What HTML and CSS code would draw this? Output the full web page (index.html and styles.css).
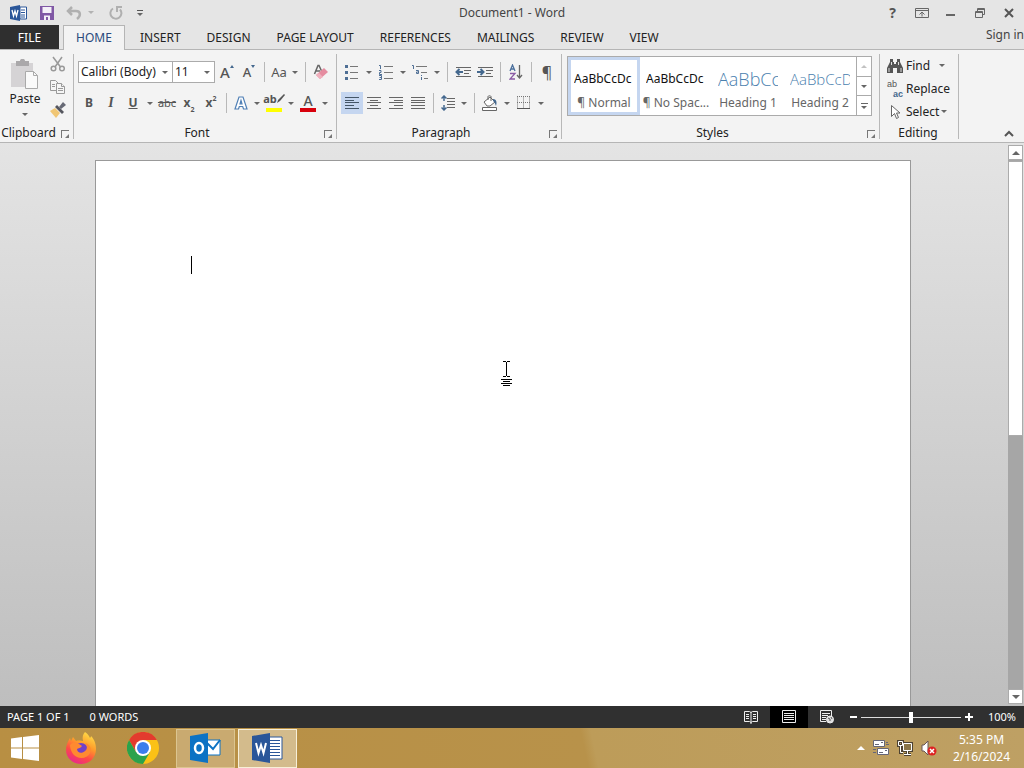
FILE: index.html
```
<!DOCTYPE html>
<html lang="en">

<head>
    <meta charset="UTF-8">
    <meta name="viewport" content="width=device-width, initial-scale=1.0">
    <title>Document1 - Word</title>
    <link rel="stylesheet" href="styles.css">
</head>

<body>

    <header class="titlebar">
        <div class="quick-access">
            <svg class="word-logo" width="18" height="16" viewBox="0 0 18 16">
                <path d="M10 2h6.500v12H10z" fill="#fff" stroke="#2a5699" />
                <path d="M11 5h4M11 7.500h4M11 10h4M11 12h4" stroke="#2a5699" />
                <path d="M0 2l10-2v16L0 14z" fill="#2a5699" />
                <path d="M2 5l1.500 6L5 6l1.500 5L8 5" fill="none" stroke="#fff" stroke-width="1.300" />
            </svg>
            <button aria-label="Save">
                <svg width="14" height="14" viewBox="0 0 14 14">
                    <path d="M0 0h14v14H0z" fill="#8058a5" />
                    <path d="M2.500 1h9v6h-9zM4 9.500h6V14H8V11H6v3H4z" fill="#f4f0f8" />
                </svg>
            </button>
            <button aria-label="Undo">
                <svg width="16" height="14" viewBox="0 0 16 14" fill="none" stroke="#b0b0b0" stroke-width="2.500">
                    <path d="M6 1L2 5l4 4M2 5h8c5 0 5 5 1 8" />
                </svg>
            </button>
            <button class="arrow pale" aria-label="Undo list"></button>
            <button aria-label="Repeat">
                <svg width="14" height="14" viewBox="0 0 14 14" fill="none" stroke="#b0b0b0" stroke-width="2">
                    <path d="M4 2.500A5.500 5.500 0 1 0 11 3.500M8 6V1h5" />
                </svg>
            </button>
            <button class="customize" aria-label="Customize toolbar"></button>
        </div>
        <h1>Document1 - Word</h1>
        <div class="window-buttons">
            <button class="help" aria-label="Help">?</button>
            <button aria-label="Ribbon display options">
                <svg width="14" height="12" viewBox="0 0 14 12" fill="none" stroke="#666">
                    <path d="M.5 1.500h13v9H.5zM.5 3.500h13M7 9.500V5M4.500 7.500L7 5l2.500 2.500" />
                </svg>
            </button>
            <button aria-label="Minimize">
                <svg width="10" height="12" viewBox="0 0 10 12"><path d="M0 7h9v2H0z" fill="#666" /></svg>
            </button>
            <button aria-label="Restore">
                <svg width="12" height="12" viewBox="0 0 12 12" fill="none" stroke="#666">
                    <path d="M1.500 4.500h7v6h-7zM1 5.500h8M3.500 4V1.500h7v6H9M3 2.500h8" />
                </svg>
            </button>
            <button aria-label="Close">
                <svg width="12" height="12" viewBox="0 0 12 12" stroke="#555" stroke-width="2">
                    <path d="M2 2l8 8M10 2l-8 8" />
                </svg>
            </button>
        </div>
    </header>

    <nav class="tabs">
        <button class="file">FILE</button>
        <button class="active">HOME</button>
        <button>INSERT</button>
        <button>DESIGN</button>
        <button>PAGE LAYOUT</button>
        <button>REFERENCES</button>
        <button>MAILINGS</button>
        <button>REVIEW</button>
        <button>VIEW</button>
        <a class="sign-in" href="#">Sign in</a>
    </nav>

    <main class="ribbon">
        <section class="group clipboard">
            <div class="group-body">
                <button class="paste">
                    <svg width="30" height="32" viewBox="0 0 30 32">
                        <path d="M1 4h22v24H1z" fill="#d5d3d5" />
                        <path d="M6 2h4c0-3 5-3 5 0h4v5H6z" fill="#aaa8aa" />
                        <path d="M15.500 12.500h8l4 4v13h-12z" fill="#fafafa" stroke="#aaa" />
                        <path d="M23.500 12.500v4h4" fill="none" stroke="#aaa" />
                    </svg>
                    <span>Paste</span>
                    <i class="triangle"></i>
                </button>
                <div class="clip-tools">
                    <button aria-label="Cut">
                        <svg width="16" height="16" viewBox="0 0 16 16" fill="none" stroke="#999" stroke-width="1.500">
                            <path d="M3 1l7.500 10M12 1L5 11" />
                            <circle cx="3.500" cy="12.500" r="2.300" />
                            <circle cx="12" cy="12.500" r="2.300" />
                        </svg>
                    </button>
                    <button aria-label="Copy">
                        <svg width="16" height="16" viewBox="0 0 16 16" fill="#f5f5f5" stroke="#999">
                            <path d="M.5 1.500h5l3 3v7h-8z" />
                            <path d="M2 5.500h3M2 7.500h3" />
                            <path d="M6.500 4.500h5l3 3v7h-8z" />
                            <path d="M11.500 4.500v3h3M8 9.500h5M8 11.500h5" />
                        </svg>
                    </button>
                    <button aria-label="Format Painter">
                        <svg width="16" height="16" viewBox="0 0 16 16">
                            <path d="M0 9l5-3 5 5-4 5z" fill="#f0c674" />
                            <path d="M5 5l2-2 7 7-2 2z" fill="#55565e" />
                            <path d="M9 5l4-5 3 3-5 4z" fill="#666975" />
                        </svg>
                    </button>
                </div>
            </div>
            <footer>Clipboard<button class="launcher" aria-label="Clipboard options"></button></footer>
        </section>

        <section class="group font">
            <div class="group-body">
                <div class="row">
                    <label class="combo family"><select aria-label="Font"><option>Calibri (Body)</option></select></label>
                    <label class="combo size"><select aria-label="Font size"><option>11</option></select></label>
                    <button class="tool grow" aria-label="Grow font">A<i></i></button>
                    <button class="tool grow shrink" aria-label="Shrink font">A<i></i></button>
                    <hr>
                    <button class="tool narrow case">Aa</button>
                    <button class="arrow" aria-label="Case list"></button>
                    <hr>
                    <button class="tool" aria-label="Clear formatting">
                        <svg width="16" height="16" viewBox="0 0 16 16">
                            <path d="M1.500 10L5 1.500h1L9 8M3 7h4" fill="none" stroke="#666" stroke-width="1.500" />
                            <path d="M3 11l8-7 4 4-8 7z" fill="#e58ca0" />
                            <path d="M3 11l3-2 4 4-3 2z" fill="#f0b0bd" />
                        </svg>
                    </button>
                </div>
                <div class="row">
                    <button class="tool bold">B</button>
                    <button class="tool italic">I</button>
                    <button class="tool underline">U</button>
                    <button class="arrow" aria-label="Underline list"></button>
                    <button class="tool strike">abc</button>
                    <button class="tool bold script">x<sub>2</sub></button>
                    <button class="tool bold script">x<sup>2</sup></button>
                    <hr>
                    <button class="tool narrow" aria-label="Text effects">
                        <svg width="14" height="14" viewBox="0 0 14 14">
                            <path d="M1 13L5 1h4l4 12h-3.500l-.8-2.500H5.300L4.500 13zM6 8h2L7 4.500z" fill="#fff" stroke="#4f7fb5" stroke-width="1.200" />
                        </svg>
                    </button>
                    <button class="arrow" aria-label="Effects list"></button>
                    <button class="tool mark">
                        <span>ab</span>
                        <svg width="8" height="10" viewBox="0 0 8 10"><path d="M0 9l1-3 6-6 1 1-5 6z" fill="#555" /></svg>
                    </button>
                    <button class="arrow" aria-label="Highlight list"></button>
                    <button class="tool text-color">A</button>
                    <button class="arrow" aria-label="Color list"></button>
                </div>
            </div>
            <footer>Font<button class="launcher" aria-label="Font options"></button></footer>
        </section>

        <section class="group paragraph">
            <div class="group-body">
                <div class="row">
                    <button class="tool" aria-label="Bullets">
                        <svg width="14" height="16" viewBox="0 0 14 16">
                            <path d="M0 1h3v3H0zM0 7h3v3H0zM0 13h3v3H0z" fill="#4f6f95" />
                            <path d="M5 2.500h8M5 8.500h8M5 14.500h8" stroke="#777" />
                        </svg>
                    </button>
                    <button class="arrow" aria-label="Bullet list"></button>
                    <button class="tool" aria-label="Numbering">
                        <svg width="16" height="16" viewBox="0 0 16 16" fill="none" stroke="#4f6f95">
                            <path d="M1 1.500h1.500V5M1 6.500h2v2H1.500v2H4M1 11.500h2.500v4H1M1.500 13.500h2" />
                            <path d="M6 2.500h9M6 8.500h9M6 14.500h9" stroke="#777" />
                        </svg>
                    </button>
                    <button class="arrow" aria-label="Numbering list"></button>
                    <button class="tool" aria-label="Multilevel list">
                        <svg width="16" height="16" viewBox="0 0 16 16" fill="none" stroke="#4f6f95">
                            <path d="M0 1.500h1.500V5M4 6.500h2.500v3H4.500V8h2M9.500 11v1M9.500 13v3" />
                            <path d="M4 2.500h11M9 8.500h6M12 14.500h4" stroke="#777" />
                        </svg>
                    </button>
                    <button class="arrow" aria-label="Multilevel options"></button>
                    <hr>
                    <button class="tool" aria-label="Decrease indent">
                        <svg width="16" height="12" viewBox="0 0 16 12" fill="none" stroke="#666">
                            <path d="M1 1.500h15M9 4.500h7M9 7.500h5M1 10.500h15" />
                            <path d="M8 6H2M4.500 3L1.500 6l3 3" stroke="#44688e" stroke-width="2" />
                        </svg>
                    </button>
                    <button class="tool" aria-label="Increase indent">
                        <svg width="16" height="12" viewBox="0 0 16 12" fill="none" stroke="#666">
                            <path d="M1 1.500h15M9 4.500h7M9 7.500h5M1 10.500h15" />
                            <path d="M0 6h6M3.500 3l3 3-3 3" stroke="#44688e" stroke-width="2" />
                        </svg>
                    </button>
                    <hr>
                    <button class="tool" aria-label="Sort">
                        <svg width="14" height="16" viewBox="0 0 14 16" fill="none" stroke-width="1.300">
                            <path d="M1 7l2.500-6L6 7M2 5h3" stroke="#4a6f9c" />
                            <path d="M1 9.500h5l-5 5.500h5" stroke="#8a5ba5" />
                            <path d="M10.500 1v13M8 11l2.500 3 2.500-3" stroke="#666" />
                        </svg>
                    </button>
                    <hr>
                    <button class="tool pilcrow">¶</button>
                </div>
                <div class="row">
                    <button class="tool selected" aria-label="Align left">
                        <svg width="14" height="12" viewBox="0 0 14 12" stroke="#456">
                            <path d="M0 .5h14M0 3.500h9M0 5.500h14M0 8.500h9M0 11.500h14" />
                        </svg>
                    </button>
                    <button class="tool" aria-label="Center">
                        <svg width="14" height="12" viewBox="0 0 14 12" stroke="#666">
                            <path d="M0 .5h14M3 3.500h8M0 5.500h14M3 8.500h8M0 11.500h14" />
                        </svg>
                    </button>
                    <button class="tool" aria-label="Align right">
                        <svg width="14" height="12" viewBox="0 0 14 12" stroke="#666">
                            <path d="M0 .5h14M5 3.500h9M0 5.500h14M5 8.500h9M0 11.500h14" />
                        </svg>
                    </button>
                    <button class="tool" aria-label="Justify">
                        <svg width="14" height="12" viewBox="0 0 14 12" stroke="#666">
                            <path d="M0 .5h14M0 3.500h14M0 5.500h14M0 8.500h14M0 11.500h14" />
                        </svg>
                    </button>
                    <hr>
                    <button class="tool narrow" aria-label="Line spacing">
                        <svg width="14" height="16" viewBox="0 0 14 16" fill="none" stroke="#666">
                            <path d="M6 3.500h8M6 6.500h8M6 9.500h8M6 12.500h8" />
                            <path d="M3 1v5M.5 3.500L3 1l2.500 2.500M3 10v5M.5 12.500L3 15l2.500-2.500" stroke="#44688e" stroke-width="1.500" />
                        </svg>
                    </button>
                    <button class="arrow" aria-label="Spacing list"></button>
                    <hr>
                    <button class="tool" aria-label="Shading">
                        <svg width="18" height="16" viewBox="0 0 18 16" fill="none" stroke="#666">
                            <path d="M1.500 12.500h14v3h-14z" fill="#fff" />
                            <path d="M3 7l6-5 5 5-5 4H6z" fill="#fff" />
                            <path d="M7 5V1.500c0-1 3-1 3 0V6" />
                            <path d="M12 4c4 0 4 4 3 7-1-2-1-4-3-5z" fill="#44688e" stroke="none" />
                        </svg>
                    </button>
                    <button class="arrow" aria-label="Shading list"></button>
                    <button class="tool" aria-label="Borders">
                        <svg width="14" height="14" viewBox="0 0 14 14" fill="none" stroke="#777">
                            <path d="M.5.5v12M6.500.5v12M12.500.5v12M0 .5h13M0 6.500h13" stroke-dasharray="1 1" />
                            <path d="M0 12.500h13" stroke="#555" />
                        </svg>
                    </button>
                    <button class="arrow" aria-label="Border list"></button>
                </div>
            </div>
            <footer>Paragraph<button class="launcher" aria-label="Paragraph options"></button></footer>
        </section>

        <section class="group styles">
            <div class="group-body">
                <div class="gallery">
                    <button class="style chosen"><b>AaBbCcDc</b><span>¶ Normal</span></button>
                    <button class="style"><b>AaBbCcDc</b><span>¶ No Spac...</span></button>
                    <button class="style heading1"><b>AaBbCc</b><span>Heading 1</span></button>
                    <button class="style heading2"><b>AaBbCcD</b><span>Heading 2</span></button>
                    <div class="scroller">
                        <button class="up pale" aria-label="Previous styles"></button>
                        <button aria-label="Next styles"></button>
                        <button class="more" aria-label="All styles"></button>
                    </div>
                </div>
            </div>
            <footer>Styles<button class="launcher" aria-label="Styles options"></button></footer>
        </section>

        <section class="group editing">
            <div class="group-body">
                <button class="edit">
                    <svg width="16" height="14" viewBox="0 0 16 14" fill="#555">
                        <path d="M3 0h3v3h1v2h2V3h1V0h3v3l3 6v5h-6V9H6v5H0V9l3-6z" />
                        <path d="M2 9v4M14 9v4M4.500 3v3M11.500 3v3" stroke="#ddd" />
                    </svg>
                    <span>Find</span><i class="triangle"></i>
                </button>
                <button class="edit replace">
                    <em><span>ab</span><b>ac</b></em>
                    <span>Replace</span>
                </button>
                <button class="edit select">
                    <svg width="16" height="16" viewBox="0 0 16 16">
                        <path d="M4.500 1.500v11l3-3 2 5 2-1-2-4.500h3.500z" fill="#fff" stroke="#666" />
                    </svg>
                    <span>Select</span><i class="triangle"></i>
                </button>
            </div>
            <footer>Editing</footer>
        </section>

        <button class="collapse" aria-label="Collapse the ribbon">
            <svg width="10" height="8" viewBox="0 0 10 8" fill="none" stroke="#555" stroke-width="2">
                <path d="M1 6l4-4 4 4" />
            </svg>
        </button>
    </main>

    <div class="workspace">
        <div class="desk">
            <article class="page"><span class="caret"></span></article>
            <svg class="pointer" width="12" height="26" viewBox="0 0 12 26" stroke="#000">
                <path d="M2 .5h3M6 .5h3M5.500 1v14M2 15.500h3M6 15.500h3M0 18.500h11M2 20.500h7M0 22.500h11M2 24.500h7" />
            </svg>
        </div>
        <div class="scrollbar">
            <button class="up" aria-label="Scroll up"></button>
            <div class="track"><div class="thumb"></div></div>
            <button aria-label="Scroll down"></button>
        </div>
    </div>

    <footer class="statusbar">
        <span>PAGE 1 OF 1</span>
        <span>0 WORDS</span>
        <div class="views">
            <button aria-label="Read mode">
                <svg width="14" height="14" viewBox="0 0 14 14" fill="none" stroke="#eee">
                    <path d="M.5 1.500h5l1.500 1 1.500-1h5v10h-5l-1.500 1-1.500-1h-5zM7 2v12M2 4.500h3M2 6.500h3M2 8.500h3M9 4.500h3M9 6.500h3M9 8.500h3" />
                </svg>
            </button>
            <button class="on" aria-label="Print layout">
                <svg width="14" height="14" viewBox="0 0 14 14" fill="none" stroke="#eee">
                    <path d="M.5.5h13v12H.5zM2 3.500h10M2 5.500h10M2 7.500h10M2 9.500h10" />
                </svg>
            </button>
            <button aria-label="Web layout">
                <svg width="14" height="14" viewBox="0 0 14 14" fill="none" stroke="#eee">
                    <path d="M6 11.500H.5V.5h11V6M2 3.500h8M2 5.500h6M2 7.500h4M2 9.500h4" />
                    <circle cx="10" cy="9.500" r="3.500" fill="#ddd" />
                    <path d="M8 8l2 1v2M11 7l1 2" stroke="#555" />
                </svg>
            </button>
        </div>
        <div class="zoom">
            <button class="minus" aria-label="Zoom out"></button>
            <input type="range" min="0" max="100" value="50" aria-label="Zoom">
            <button class="plus" aria-label="Zoom in"></button>
        </div>
        <span class="percent">100%</span>
    </footer>

    <footer class="taskbar">
        <button class="task start" aria-label="Start">
            <svg width="28" height="26" viewBox="0 0 28 26" fill="#fff">
                <path d="M0 3.500L11 2v10.500H0zM12 2l16-2v12.500H12zM0 13.500h11V24L0 22.500zM12 13.500h16V26l-16-2z" />
            </svg>
        </button>
        <button class="task" aria-label="Firefox">
            <svg width="32" height="32" viewBox="0 0 32 32">
                <defs>
                    <linearGradient id="fire" x1="0.800" y1="0" x2="0.300" y2="1">
                        <stop offset="0" stop-color="#ffe24a" />
                        <stop offset="0.400" stop-color="#ff9a2a" />
                        <stop offset="0.700" stop-color="#ff4a45" />
                        <stop offset="1" stop-color="#e8278f" />
                    </linearGradient>
                </defs>
                <path d="M20 0c3 2 4 4 5 6 1-1 1-2 1-2 4 4 5 9 5 13 0 9-7 15-15 15S1 26 1 18c0-5 2-9 4-12l1 3 2-4 3 4c3-1 6 0 7 0-1-4 0-7 2-9z" fill="url(#fire)" />
                <circle cx="16" cy="18" r="7" fill="#7241c8" />
                <path d="M5 13c3-3 6-3 9-1l3 2c-1 2-4 2-5 3 0 4 5 5 8 2 3-2 2-6 0-8 5 1 7 6 5 10-3 6-12 7-17 1-2-3-3-6-3-9z" fill="#ff8a30" />
            </svg>
        </button>
        <button class="task" aria-label="Chrome">
            <svg width="32" height="32" viewBox="0 0 32 32">
                <circle cx="16" cy="16" r="16" fill="#fbc116" />
                <path d="M2.100 8A16 16 0 0 1 29.900 8H16l-7 12z" fill="#e33b2e" />
                <path d="M2.100 8A16 16 0 0 0 16 32l7-12-14 0z" fill="#2ba24c" />
                <circle cx="16" cy="16" r="8" fill="#fff" />
                <circle cx="16" cy="16" r="6" fill="#3b7ded" />
            </svg>
        </button>
        <button class="task open" aria-label="Outlook">
            <svg width="32" height="30" viewBox="0 0 32 30">
                <path d="M17 7h13v15H17z" fill="#fff" stroke="#0c72c4" />
                <path d="M17 10l6 6 7-9" fill="none" stroke="#0c72c4" stroke-width="2" />
                <path d="M0 3l18-3v30L0 27z" fill="#0c72c4" />
                <ellipse cx="9" cy="15" rx="4" ry="5" fill="none" stroke="#fff" stroke-width="2.500" />
            </svg>
        </button>
        <button class="task open current" aria-label="Word">
            <svg width="32" height="30" viewBox="0 0 32 30">
                <path d="M17 4h13v22H17z" fill="#fff" stroke="#2a5699" />
                <path d="M18 7.500h10M18 10.500h10M18 13.500h10M18 16.500h10M18 19.500h10M18 22.500h10" stroke="#2a5699" />
                <path d="M0 3l18-3v30L0 27z" fill="#2a5699" />
                <path d="M4 10l2.500 10L9 12l2.500 8L14 10" fill="none" stroke="#fff" stroke-width="2" />
            </svg>
        </button>
        <div class="tray">
            <button aria-label="Hidden icons">
                <svg width="8" height="6" viewBox="0 0 8 6"><path d="M0 5l4-4 4 4z" fill="#fff" /></svg>
            </button>
            <button aria-label="Mail">
                <svg width="16" height="16" viewBox="0 0 16 16" fill="#fff" stroke="#667">
                    <path d="M.5.5h11v6H.5zM4.500 8.500h11v6h-11z" />
                    <path d="M8 2.500h2M2 4.500h4M12 10.500h2M6 12.500h4M13 2.500h2M13 4.500h3M0 9.500h3M0 12.500h3" />
                </svg>
            </button>
            <button aria-label="Network">
                <svg width="16" height="16" viewBox="0 0 16 16" fill="none">
                    <path d="M6.500 3.500h8v7h-8zM10.500 11v3M7 14.500h7M1.500 1.500h4v4h-4zM3.500 6v6.500H6" stroke="#4d4231" stroke-width="3" />
                    <path d="M6.500 3.500h8v7h-8z" fill="#8a7548" />
                    <path d="M6.500 3.500h8v7h-8zM10.500 11v3M7 14.500h7M1.500 1.500h4v4h-4zM3.500 6v6.500H6" stroke="#fff" />
                </svg>
            </button>
            <button aria-label="Volume muted">
                <svg width="16" height="16" viewBox="0 0 16 16">
                    <path d="M1 5h2l4-4v14l-4-4H1z" fill="#fff" stroke="#655" />
                    <circle cx="11" cy="11" r="4.500" fill="#d22" />
                    <path d="M9 9l4 4M13 9l-4 4" stroke="#fff" stroke-width="1.500" />
                </svg>
            </button>
        </div>
        <div class="clock"><span>5:35 PM</span><span>2/16/2024</span></div>
    </footer>

</body>

</html>
```
FILE: styles.css
```
* {
    box-sizing: border-box;
}

body {
    margin: 0;
    height: 100vh;
    display: flex;
    flex-direction: column;
    overflow: hidden;
    background: #e5e5e5;
    color: #222;
    font-family: "Noto Sans", "Open Sans", sans-serif;
    font-size: 12px;
    line-height: 16px;
}

button {
    display: flex;
    align-items: center;
    justify-content: center;
    flex-shrink: 0;
    margin: 0;
    padding: 0;
    border: none;
    background: none;
    color: inherit;
    font: inherit;
    cursor: pointer;
}

svg {
    display: block;
    flex-shrink: 0;
}

/* Small drop-down triangles */

.triangle,
.arrow::before,
.combo::after,
.customize::before,
.scroller button::before,
.scrollbar button::before {
    content: "";
    border: 3px solid transparent;
    border-top-color: #666;
    border-bottom: none;
}

.scroller .up::before,
.scrollbar .up::before {
    border-top: none;
    border-bottom: 3px solid #666;
}

.arrow {
    width: 12px;
    height: 22px;
}

.pale {
    opacity: 0.4;
}

/* Title bar */

.titlebar {
    display: grid;
    grid-template-columns: 1fr auto 1fr;
    align-items: center;
    height: 25px;
    flex-shrink: 0;
}

.titlebar h1 {
    margin: 0;
    font-size: 12px;
    font-weight: normal;
    color: #444;
}

.quick-access {
    display: flex;
    align-items: center;
    padding-left: 10px;
    height: 22px;
}

.quick-access button {
    margin-left: 12px;
}

.quick-access .arrow {
    margin-left: 3px;
}

.quick-access .customize {
    flex-direction: column;
    gap: 2px;
    width: 8px;
    margin-left: 13px;
}

.customize::before {
    order: 2;
}

.customize::after {
    content: "";
    width: 6px;
    height: 1px;
    background: #555;
}

.window-buttons {
    display: flex;
    justify-content: flex-end;
    padding-right: 1px;
}

.window-buttons button {
    width: 29px;
    height: 22px;
}

.window-buttons .help {
    font-size: 14px;
    font-weight: bold;
    color: #555;
}

/* Ribbon tabs */

.tabs {
    display: flex;
    height: 25px;
    flex-shrink: 0;
    border-bottom: 1px solid #b5b5b5;
}

.tabs button {
    padding: 1px 13px 0;
}

.tabs .file {
    width: 59px;
    margin-right: 4px;
    background: #2f2f2f;
    color: #fff;
}

.tabs .active {
    width: 62px;
    height: 25px;
    margin-right: 2px;
    padding: 0;
    background: #f3f3f3;
    border: 1px solid #b5b5b5;
    border-bottom: none;
    color: #2a4a7c;
}

.sign-in {
    margin-left: auto;
    padding-top: 2px;
    color: #444;
    text-decoration: none;
    white-space: nowrap;
}

/* Ribbon */

.ribbon {
    display: flex;
    height: 93px;
    flex-shrink: 0;
    padding-top: 4px;
    background: #f3f3f3;
    border-bottom: 1px solid #b5b5b5;
}

.group {
    display: flex;
    flex-direction: column;
    flex-shrink: 0;
    margin-bottom: 3px;
    border-right: 1px solid #b8b8b8;
}

.group-body {
    flex: 1;
}

.group footer {
    position: relative;
    height: 13px;
    padding-right: 16px;
    line-height: 13px;
    text-align: center;
}

.launcher {
    position: absolute;
    right: 4px;
    bottom: 1px;
    width: 8px;
    height: 8px;
    border-top: 1px solid #777;
    border-left: 1px solid #777;
}

.launcher::before {
    content: "";
    margin: 2px 0 0 2px;
    border: 2px solid #777;
    border-top-color: transparent;
    border-left-color: transparent;
}

.clipboard {
    width: 74px;
}

.clipboard .group-body {
    display: flex;
}

.paste {
    flex-direction: column;
    justify-content: flex-start;
    width: 50px;
    padding-top: 5px;
}

.paste .triangle {
    margin-top: 6px;
}

.clip-tools {
    display: flex;
    flex-direction: column;
    gap: 7px;
    padding-top: 2px;
}

.font {
    width: 263px;
}

.paragraph {
    width: 225px;
}

.row {
    display: flex;
    align-items: center;
    height: 22px;
    margin: 7px 0 9px 4px;
}

.row + .row {
    margin-bottom: 0;
}

.row hr {
    width: 1px;
    height: 20px;
    margin: 0 4px;
    border: none;
    background: #b8b8b8;
}

.combo {
    display: flex;
    align-items: center;
    height: 22px;
    padding-right: 4px;
    border: 1px solid #ababab;
    background: #fff;
}

.combo select {
    flex: 1;
    min-width: 0;
    padding: 0 0 0 2px;
    border: none;
    appearance: none;
    background: none;
    color: #222;
    font: inherit;
}

.family {
    width: 95px;
}

.size {
    width: 43px;
    margin: 0 1px 0 -1px;
}

.tool {
    width: 22px;
    height: 22px;
    color: #555;
}

.narrow {
    width: 20px;
}

.selected {
    background: #c5d6f0;
}

.grow {
    font-size: 15px;
    font-weight: 500;
}

.grow i {
    align-self: flex-start;
    margin-top: 4px;
    border: 2px solid transparent;
    border-top: none;
    border-bottom: 3px solid #44688e;
}

.shrink {
    font-size: 13px;
}

.shrink i {
    border-top: 3px solid #44688e;
    border-bottom: none;
}

.case {
    font-size: 13px;
}

.bold {
    font-weight: bold;
}

.italic {
    font-family: "Liberation Serif", serif;
    font-size: 14px;
    font-style: italic;
    font-weight: bold;
}

.underline {
    font-weight: bold;
    text-decoration: underline;
}

.strike {
    font-size: 11px;
    text-decoration: line-through;
}

.script sub,
.script sup {
    font-size: 7px;
    line-height: 8px;
}

.script sub {
    align-self: flex-end;
}

.script sup {
    align-self: flex-start;
    margin-top: 3px;
}

.mark {
    height: 18px;
    padding-bottom: 4px;
    border-bottom: 4px solid #ffff00;
    font-size: 11px;
    font-weight: bold;
    background-clip: padding-box;
}

.mark,
.text-color {
    width: 16px;
    margin: 0 3px;
}

.text-color {
    height: 18px;
    border-bottom: 4px solid #d8000c;
    font-size: 14px;
    font-weight: 500;
    line-height: 14px;
}

.pilcrow {
    font-size: 16px;
}

/* Styles gallery */

.styles {
    width: 318px;
}

.styles .group-body {
    padding: 2px 7px 0 5px;
}

.gallery {
    display: flex;
    height: 60px;
    border: 1px solid #ababab;
    background: #fff;
}

.style {
    flex-direction: column;
    justify-content: flex-end;
    width: 72px;
    padding-bottom: 4px;
    color: #666;
    white-space: nowrap;
}

.style b {
    width: 60px;
    height: 20px;
    margin-bottom: 6px;
    overflow: hidden;
    color: #111;
    font-weight: normal;
    line-height: 20px;
    text-align: left;
}

.chosen {
    border: 3px solid #c5d6f0;
    padding-bottom: 1px;
}

.heading1 b {
    color: #4a80ae;
    font-family: "Open Sans", sans-serif;
    font-weight: 300;
    font-size: 18px;
}

.heading2 b {
    color: #4a80ae;
    font-family: "Open Sans", sans-serif;
    font-weight: 300;
    font-size: 15px;
}

.scroller {
    display: flex;
    flex: 1;
    flex-direction: column;
    border-left: 1px solid #ababab;
}

.scroller button {
    flex: 1;
}

.scroller button + button {
    border-top: 1px solid #ababab;
}

.scroller .more {
    flex-direction: column;
    gap: 2px;
}

.scroller .more::after {
    content: "";
    order: -1;
    width: 7px;
    height: 1px;
    background: #666;
}

/* Editing group */

.editing {
    width: 79px;
}

.editing footer {
    padding-right: 2px;
}

.edit {
    gap: 3px;
    height: 23px;
    padding-left: 7px;
}

.edit .triangle {
    margin-left: 6px;
}

.select .triangle {
    margin-left: -1px;
}

.replace em {
    display: flex;
    flex-direction: column;
    width: 16px;
    color: #555;
    font-family: "Liberation Sans", sans-serif;
    font-size: 9px;
    font-style: normal;
    line-height: 10px;
    text-align: left;
}

.replace b {
    color: #44688e;
    text-align: right;
}

.collapse {
    align-self: flex-end;
    width: 20px;
    height: 16px;
    margin: 0 5px 0 auto;
}

/* Document */

.workspace {
    display: flex;
    flex: 1;
    min-height: 0;
    background: linear-gradient(#e4e4e4, #bebebe);
}

.desk {
    position: relative;
    display: flex;
    flex: 1;
    justify-content: center;
    padding: 17px 2px 0 0;
}

.page {
    width: 816px;
    padding: 95px;
    border: 1px solid #999;
    border-bottom: none;
    background: #fff;
}

.caret {
    display: block;
    width: 1px;
    height: 18px;
    background: #000;
}

.pointer {
    position: absolute;
    left: 501px;
    top: 218px;
}

.scrollbar {
    display: flex;
    flex-direction: column;
    width: 16px;
    padding: 2px 1px 2px 0;
}

.scrollbar button {
    height: 15px;
    border: 1px solid #ababab;
    background: #fff;
}

.scrollbar button::before {
    border-width: 4px;
    border-bottom-width: 0;
}

.scrollbar .up::before {
    border-width: 0 4px 4px;
}

.track {
    flex: 1;
    padding-top: 1px;
    background: #a6a6a6;
}

.thumb {
    height: 52%;
    border: 1px solid #ababab;
    background: #fff;
}

/* Status bar */

.statusbar {
    display: flex;
    align-items: center;
    gap: 20px;
    height: 22px;
    flex-shrink: 0;
    padding: 0 8px 0 7px;
    background: #303030;
    color: #fff;
    font-size: 11px;
}

.views {
    display: flex;
    margin-left: auto;
}

.views button {
    width: 38px;
    height: 22px;
}

.views .on {
    background: #000;
}

.zoom {
    display: flex;
    align-items: center;
    gap: 4px;
    margin-left: -16px;
}

.zoom input {
    width: 100px;
    height: 12px;
    margin: 0;
    appearance: none;
    background: linear-gradient(#ddd, #ddd) center / 100% 1px no-repeat;
}

.zoom input::-webkit-slider-thumb {
    appearance: none;
    width: 4px;
    height: 11px;
    background: #fff;
}

.minus,
.plus {
    width: 7px;
    height: 8px;
    background: linear-gradient(#fff, #fff) center / 100% 2px no-repeat;
}

.plus {
    width: 8px;
    background: linear-gradient(#fff, #fff) center / 100% 2px no-repeat, linear-gradient(#fff, #fff) center / 2px 100% no-repeat;
}

.percent {
    margin-left: -5px;
}

/* Taskbar */

.taskbar {
    display: flex;
    align-items: center;
    height: 40px;
    flex-shrink: 0;
    padding-right: 14px;
    background: linear-gradient(78deg, #b88f43, #b8924a 57%, #bd9c59 58%, #bea064);
    color: #fff;
}

.task {
    width: 62px;
    height: 40px;
}

.start {
    width: 50px;
}

.open {
    width: 59px;
    height: 39px;
    margin-left: 2px;
    border: 1px solid #dcc590;
    background: #c9aa70;
}

.current {
    margin-left: 3px;
    border-color: #f7efd8;
    background: #d3bb8c;
}

.tray {
    display: flex;
    align-items: center;
    gap: 8px;
    margin-left: auto;
}

.clock {
    display: flex;
    flex-direction: column;
    align-items: center;
    margin-left: 16px;
    line-height: 17px;
}
```
